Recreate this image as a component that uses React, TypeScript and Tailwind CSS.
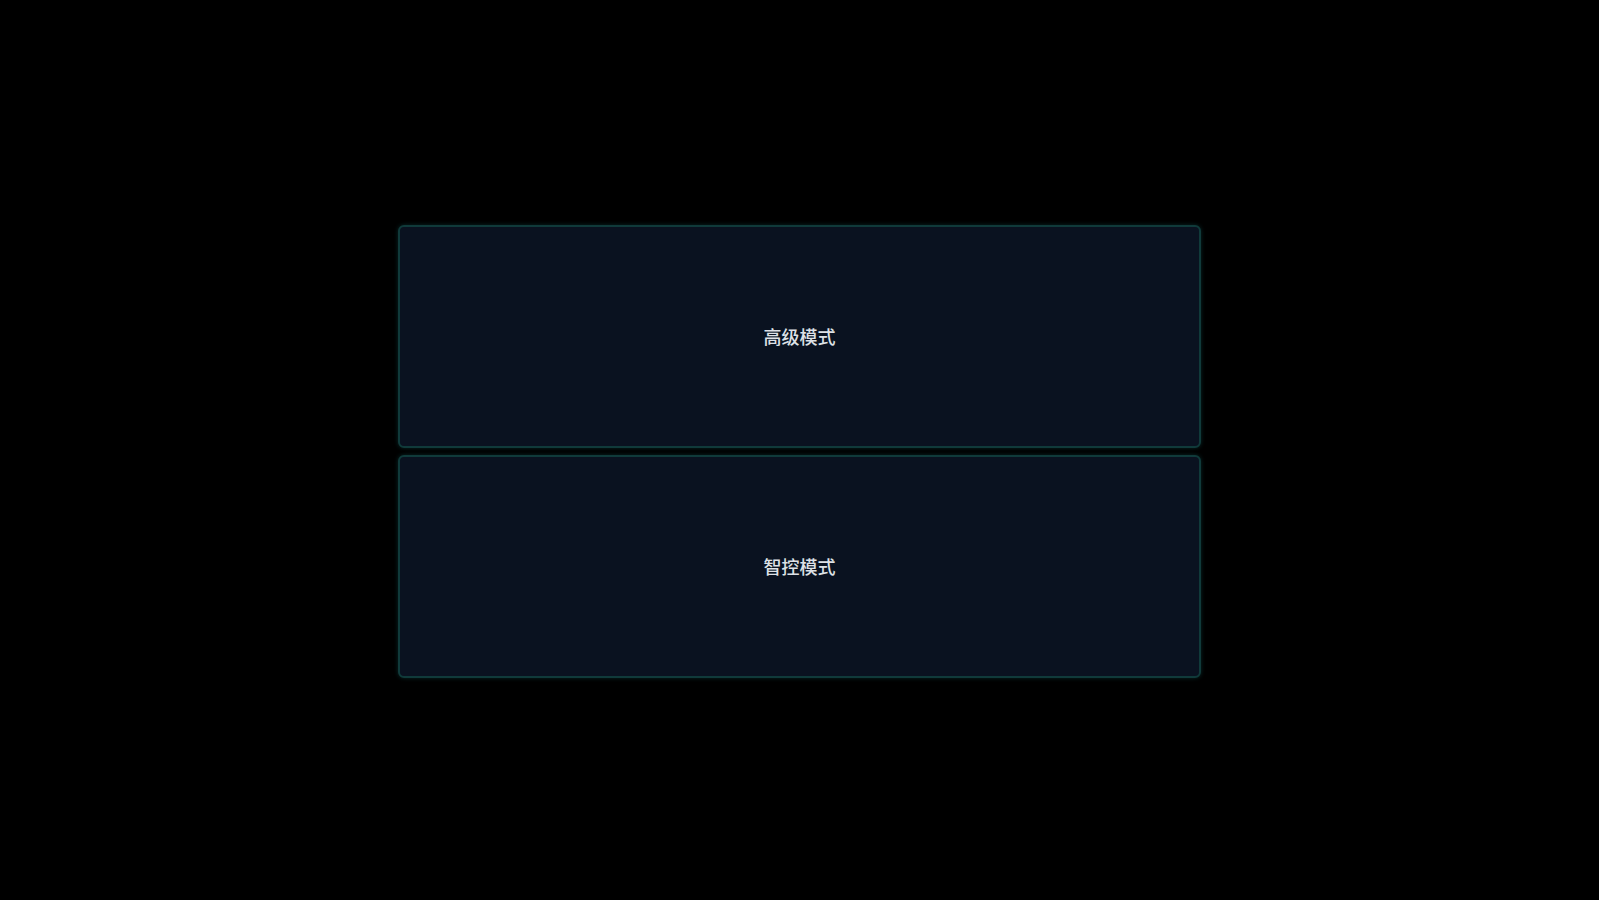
import React from 'react';

const modes = ['高级模式', '智控模式'];

const App: React.FC = () => {
  return (
    <div
      className="min-h-screen w-full bg-black flex items-center justify-center"
      style={{ fontFamily: '"Noto Sans CJK SC", "Noto Sans", sans-serif' }}
    >
      <div className="flex flex-col gap-[7px] w-[803px] mt-[2px]">
        {modes.map((m) => (
          <button
            key={m}
            className="h-[223px] w-full rounded-md border-2 border-[#103a3a] bg-[#0a1220] shadow-[0_0_4px_rgba(20,90,90,0.45)] flex items-center justify-center text-[18px] font-medium text-[#dde1e6]"
          >
            {m}
          </button>
        ))}
      </div>
    </div>
  );
};

export default App;
